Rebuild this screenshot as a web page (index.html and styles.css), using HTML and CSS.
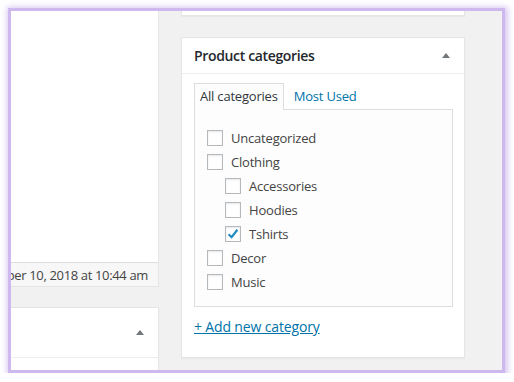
FILE: index.html
```html
<!DOCTYPE html>
<html lang="en">
<head>
  <meta charset="UTF-8">
  <title>Product categories</title>
  <link rel="stylesheet" href="styles.css">
</head>
<body>

  <div class="frame">
    <div class="columns">

      <!-- left column: editor + next box -->
      <div class="col-left">
        <div class="editor">
          <div class="editor-body"></div>
          <div class="editor-foot"><span>Last edited on September 10, 2018 at 10:44 am</span></div>
        </div>
        <div class="postbox postbox-left">
          <div class="hndle"><span class="toggle"></span></div>
          <div class="inside-blank"></div>
        </div>
      </div>

      <!-- right column: sidebar boxes -->
      <div class="col-right">
        <div class="postbox postbox-top"></div>

        <div class="postbox cats">
          <div class="hndle">
            <h2>Product categories</h2>
            <span class="toggle"></span>
          </div>
          <div class="inside">
            <ul class="tabs">
              <li class="tab active">All categories</li>
              <li class="tab"><a href="#">Most Used</a></li>
            </ul>
            <div class="tab-panel">
              <ul class="checklist">
                <li><label><span class="cb"></span>Uncategorized</label></li>
                <li><label><span class="cb"></span>Clothing</label>
                  <ul class="children">
                    <li><label><span class="cb"></span>Accessories</label></li>
                    <li><label><span class="cb"></span>Hoodies</label></li>
                    <li><label><span class="cb checked"><svg viewBox="0 0 16 16" width="16" height="16"><path d="M3.6 8.2 L6.6 11.2 L12.4 3.8" fill="none" stroke="#1e8cbe" stroke-width="2.2"/></svg></span>Tshirts</label></li>
                  </ul>
                </li>
                <li><label><span class="cb"></span>Decor</label></li>
                <li><label><span class="cb"></span>Music</label></li>
              </ul>
            </div>
            <a class="add-new" href="#">+ Add new category</a>
          </div>
        </div>
      </div>

    </div>
  </div>

</body>
</html>
```

FILE: styles.css
```css
body {
  margin: 0;
  background-color: #fff;
  font-family: "Open Sans", Arial, sans-serif;
  font-size: 13px;
  letter-spacing: -0.2px;
  color: #555;
}

.frame {
  margin: 8px 0 0 8px;
  width: 491px;
  height: 359px;
  border: 3px solid #cdb9ee;
  box-shadow: 1px 1px 6px 2px rgba(190, 160, 230, 0.6);
  background-color: #f1f1f1;
  overflow: hidden;
}

.columns {
  display: grid;
  grid-template-columns: 148px 284px;
  column-gap: 22px;
}

ul {
  list-style: none;
  margin: 0;
  padding: 0;
}

a {
  color: #0073aa;
  text-decoration: none;
}

/* left column */
.editor {
  background-color: #fff;
  border-right: 1px solid #e5e5e5;
}

.editor-body {
  height: 251px;
  border-bottom: 1px solid #ddd;
}

.editor-foot {
  height: 23px;
  background-color: #f7f7f7;
  border-bottom: 1px solid #e5e5e5;
  display: flex;
  justify-content: flex-end;
  align-items: center;
  overflow: hidden;
  white-space: nowrap;
  padding-right: 10px;
  letter-spacing: -0.35px;
  color: #444;
}

.postbox {
  background-color: #fff;
  border: 1px solid #e5e5e5;
  box-shadow: 0 1px 1px rgba(0, 0, 0, 0.04);
}

.postbox-left {
  margin-top: 20px;
  border-left: none;
}

.postbox-left .hndle {
  height: 49px;
  justify-content: flex-end;
  padding-right: 14px;
}

.inside-blank {
  height: 40px;
}

.hndle {
  display: flex;
  align-items: center;
  border-bottom: 1px solid #eee;
}

.toggle {
  width: 0;
  height: 0;
  border-left: 4px solid transparent;
  border-right: 4px solid transparent;
  border-bottom: 5px solid #72777c;
}

/* right column */
.postbox-top {
  height: 4px;
  border-top: none;
}

.cats {
  margin-top: 21px;
}

.cats .hndle {
  height: 35px;
  padding: 0 14px 0 12px;
  justify-content: space-between;
}

.cats h2 {
  margin: 0;
  font-size: 14px;
  font-weight: 600;
  letter-spacing: -0.35px;
  color: #23282d;
}

.inside {
  padding: 9px 11px 21px 12px;
}

.tabs {
  display: flex;
}

.tab {
  height: 26px;
  line-height: 25px;
  padding: 0 5px 0 5px;
  border: 1px solid transparent;
  border-bottom: none;
  margin-bottom: -1px;
  color: #555;
}

.tab a {
  padding-left: 4px;
}

.tab.active {
  background-color: #fdfdfd;
  border-color: #ddd;
  color: #32373c;
  position: relative;
}

.tab-panel {
  box-sizing: border-box;
  height: 198px;
  border: 1px solid #ddd;
  background-color: #fdfdfd;
  padding: 16px 12px 0;
}

.checklist {
  color: #444;
}

.checklist li {
  line-height: 24px;
}

.checklist label {
  display: flex;
  align-items: center;
  height: 24px;
  gap: 8px;
}

.children {
  padding-left: 18px;
}

.cb {
  width: 14px;
  height: 14px;
  border: 1px solid #b4b9be;
  background-color: #fff;
  box-shadow: inset 0 1px 2px rgba(0, 0, 0, 0.1);
  display: inline-flex;
  align-items: center;
  justify-content: center;
  flex-shrink: 0;
}

.cb svg {
  flex-shrink: 0;
}

.add-new {
  display: inline-block;
  margin-top: 10px;
  text-decoration: underline;
  font-size: 14px;
  letter-spacing: -0.15px;
}
```
